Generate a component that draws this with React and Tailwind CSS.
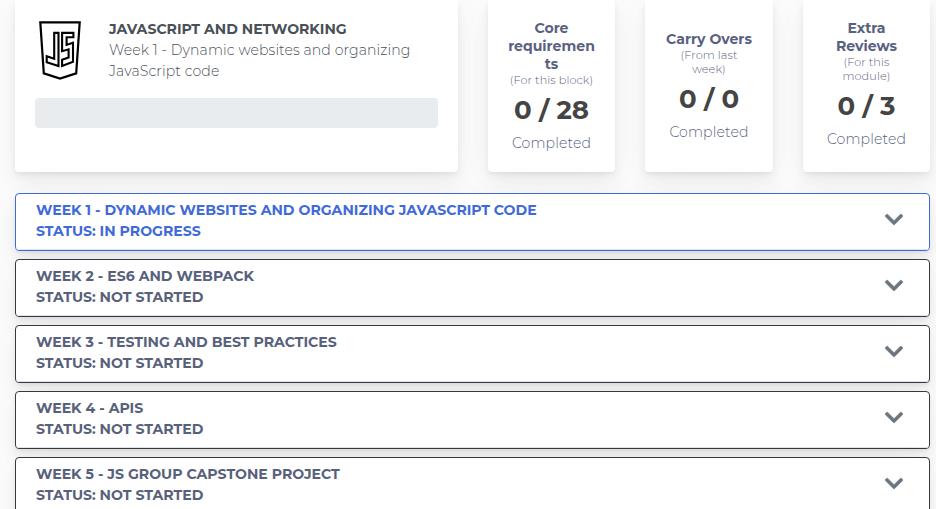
import { FaChevronDown } from "react-icons/fa";

const cardShadow =
  "shadow-[0_7.5px_35px_rgba(4,9,20,0.03),0_15px_22.5px_rgba(4,9,20,0.03),0_4px_8.5px_rgba(4,9,20,0.05),0_2px_3px_rgba(4,9,20,0.03)]";

function JsLogo() {
  return (
    <svg className="h-[60px] w-[44px] shrink-0" viewBox="0 0 44 60" fill="none" stroke="#000" strokeWidth="2.2">
      <path d="M2.3 2.4H41.7L38.2 53.4L22 58.6L5.8 53.4Z" />
      <path d="M16.2 12.9H20.5V46L8.7 42.2V36.3L16.2 38.8Z" strokeWidth="2.1" />
      <path d="M24.1 12.9H35.4V17.3H28.6V24.9L35 22.8V41.8L24.1 46V39.8L30.6 37.5V29.3L24.1 31.2Z" strokeWidth="2.1" />
    </svg>
  );
}

function StatCard({ title, note, value, className }) {
  return (
    <section
      className={`${cardShadow} ${className} flex h-[173px] shrink-0 flex-col items-center rounded bg-white text-center text-[#596181]`}
    >
      {title.map((line) => (
        <h2 key={line} className="text-[14.08px] leading-[18px] font-bold whitespace-nowrap">
          {line}
        </h2>
      ))}
      {note.map((line) => (
        <p key={line} className="text-[11.26px] leading-[14px] font-light tracking-[0.1px] whitespace-nowrap">
          {line}
        </p>
      ))}
      <p className="mt-[7px] text-[26px] leading-[32px] font-bold whitespace-nowrap text-[#444]">{value}</p>
      <p className="mt-[7px] text-[14.08px] leading-[21px] font-light tracking-[0.12px]">Completed</p>
    </section>
  );
}

const weeks = [
  { title: "WEEK 1 - DYNAMIC WEBSITES AND ORGANIZING JAVASCRIPT CODE", status: "STATUS: IN PROGRESS", active: true },
  { title: "WEEK 2 - ES6 AND WEBPACK", status: "STATUS: NOT STARTED" },
  { title: "WEEK 3 - TESTING AND BEST PRACTICES", status: "STATUS: NOT STARTED" },
  { title: "WEEK 4 - APIS", status: "STATUS: NOT STARTED" },
  { title: "WEEK 5 - JS GROUP CAPSTONE PROJECT", status: "STATUS: NOT STARTED" },
];

function WeekRow({ week }) {
  return (
    <li
      className={`${cardShadow} ${week.active ? "border-[#3f6ad8] text-[#3f6ad8]" : "border-[#343a40] text-[#58617c]"} h-[58px] shrink-0 rounded border bg-white`}
    >
      <div className="flex h-full justify-between rounded-[3px] border-b border-[#dfe4ef] pr-[26px] pl-5">
        <div className="pt-[6px] text-[14.1px] leading-[21px] font-bold whitespace-nowrap">
          <p>{week.title}</p>
          <p>{week.status}</p>
        </div>
        <FaChevronDown className="mt-[15px] h-[21px] w-[18px] overflow-visible stroke-[#6c757d] stroke-[14] text-[#6c757d]" />
      </div>
    </li>
  );
}

export default function App() {
  return (
    <main className="h-[509px] w-[936px] overflow-hidden bg-[#fbfbfb] pl-[15px] font-['Montserrat','Open_Sans',sans-serif]">
      <div className="-mt-px flex">
        <section className={`${cardShadow} h-[173px] w-[443px] shrink-0 rounded bg-white px-5 pt-[20px]`}>
          <div className="flex h-[79px]">
            <div className="w-[74px] pt-px pl-[3px]">
              <JsLogo />
            </div>
            <div className="text-[14.08px] leading-[21px] whitespace-nowrap text-[#495057]">
              <h1 className="font-bold">JAVASCRIPT AND NETWORKING</h1>
              <p className="font-light tracking-[0.1px]">Week 1 - Dynamic websites and organizing</p>
              <p className="font-light tracking-[0.1px]">JavaScript code</p>
            </div>
          </div>
          <div className="h-[30px] rounded bg-[#e9ecef]" />
        </section>
        <StatCard
          className="ml-[30px] w-[127px] pt-[20px]"
          title={["Core", "requiremen", "ts"]}
          note={["(For this block)"]}
          value="0 / 28"
        />
        <StatCard
          className="ml-[30px] w-[128px] pt-[31px]"
          title={["Carry Overs"]}
          note={["(From last", "week)"]}
          value="0 / 0"
        />
        <StatCard
          className="ml-[30px] w-[127px] pt-[20px]"
          title={["Extra", "Reviews"]}
          note={["(For this", "module)"]}
          value="0 / 3"
        />
      </div>
      <ul className="mt-[21px] flex w-[915px] flex-col gap-2">
        {weeks.map((week) => (
          <WeekRow key={week.title} week={week} />
        ))}
      </ul>
    </main>
  );
}
